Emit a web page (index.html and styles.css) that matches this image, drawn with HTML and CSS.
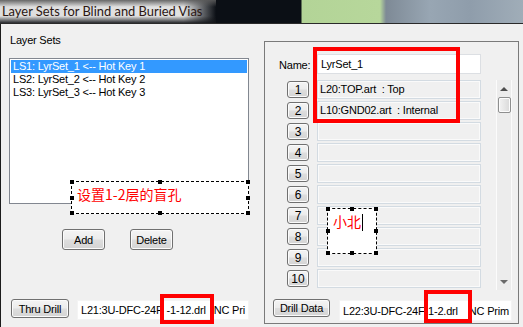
FILE: index.html
```html
<!DOCTYPE html>
<html>
<head>
<meta charset="utf-8">
<link rel="stylesheet" href="styles.css">
</head>
<body>
<div class="titlebar"><span class="title">Layer Sets for Blind and Buried Vias</span></div>
<div class="dialog">
  <div class="left">
    <div class="label">Layer Sets</div>
    <div class="listbox">
      <div class="item sel">LS1: LyrSet_1 &lt;-- Hot Key 1</div>
      <div class="item">LS2: LyrSet_2 &lt;-- Hot Key 2</div>
      <div class="item">LS3: LyrSet_3 &lt;-- Hot Key 3</div>
    </div>
    <div class="btnrow">
      <div class="btn btn-std">Add</div>
      <div class="btn btn-std">Delete</div>
    </div>
    <div class="bottomrow">
      <div class="btn btn-thru">Thru Drill</div>
      <div class="drillfield drillfield-left"><span>L21:3U-DFC-24F</span><span class="gap-a">-1-12.drl</span><span class="gap-b">NC Pri</span></div>
    </div>
  </div>

  <div class="group">
    <div class="namerow">
      <span class="namelabel">Name:</span>
      <div class="input">LyrSet_1</div>
    </div>
    <div class="layerarea">
      <div class="rows">
        <div class="row"><div class="btn num">1</div><div class="lfield">L20:TOP.art&nbsp; : Top</div></div>
        <div class="row"><div class="btn num">2</div><div class="lfield">L10:GND02.art&nbsp; : Internal</div></div>
        <div class="row"><div class="btn num">3</div><div class="lfield"></div></div>
        <div class="row"><div class="btn num">4</div><div class="lfield"></div></div>
        <div class="row"><div class="btn num">5</div><div class="lfield"></div></div>
        <div class="row"><div class="btn num">6</div><div class="lfield"></div></div>
        <div class="row"><div class="btn num">7</div><div class="lfield"></div></div>
        <div class="row"><div class="btn num">8</div><div class="lfield"></div></div>
        <div class="row"><div class="btn num">9</div><div class="lfield"></div></div>
        <div class="row"><div class="btn num">10</div><div class="lfield"></div></div>
      </div>
      <div class="scroll">
        <div class="arrowbox"><span class="tri-up"></span></div>
        <div class="thumb"></div>
        <div class="spacer"></div>
        <div class="arrowbox"><span class="tri-down"></span></div>
      </div>
    </div>
    <div class="bottomrow2">
      <div class="btn btn-drill">Drill Data</div>
      <div class="drillfield drillfield-right"><span>L22:3U-DFC-24F-1-2.drl</span><span class="gap-c">NC Prim</span></div>
    </div>
    <div class="redbox redbox-name"></div>
    <div class="redbox redbox-right"></div>
  </div>

  <div class="redbox redbox-left"></div>

  <div class="note note-a">设置1-2层的盲孔
    <span class="h h1"></span><span class="h h2"></span><span class="h h3"></span>
    <span class="h h4"></span><span class="h h5"></span>
    <span class="h h6"></span><span class="h h7"></span><span class="h h8"></span>
  </div>
  <div class="note note-b">小北<span class="caret"></span>
    <span class="h h1"></span><span class="h h2"></span><span class="h h3"></span>
    <span class="h h4"></span><span class="h h5"></span>
    <span class="h h6"></span><span class="h h7"></span><span class="h h8"></span>
  </div>
</div>
</body>
</html>
```

FILE: styles.css
```css
* { box-sizing: border-box; margin: 0; padding: 0; }

body {
  width: 523px;
  height: 327px;
  overflow: hidden;
  background: #f0f0f0;
  font-family: "Liberation Sans", Arial, sans-serif;
  font-size: 11px;
  letter-spacing: -0.2px;
  color: #000;
}

.titlebar {
  height: 24px;
  border-bottom: 1px solid #2a2a2a;
  display: flex;
  background: linear-gradient(to right, #0b0f15 0, #0b0f15 301px, #b3d497 302px, #b7d79b 380px, #7e8a96 386px, #98a6b3 430px, #8f9dab 470px, #a0adb8 523px);
}

.title {
  width: 216px;
  height: 23px;
  line-height: 23px;
  padding: 0 0 0 2px;
  font-family: Lato, "Noto Sans", sans-serif;
  font-size: 12.9px;
  letter-spacing: 0;
  white-space: nowrap;
  color: #2a1612;
  background:
    linear-gradient(to bottom, rgba(90, 90, 90, 0.9) 0, rgba(200, 200, 200, 0) 30%, rgba(200, 200, 200, 0) 70%, rgba(20, 22, 26, 0.9) 100%),
    linear-gradient(to right, #dedede 0, #e2e2e2 85%, #0b0f15 100%);
}

.dialog {
  position: relative;
  display: flex;
  height: 303px;
  border-left: 1px solid #1c1c1c;
}

/* left pane */
.left {
  width: 263px;
  padding: 10px 0 0 8px;
}

.label {
  height: 13px;
  line-height: 13px;
  padding-left: 1px;
}

.listbox {
  margin-top: 11px;
  width: 240px;
  height: 146px;
  border: 1px solid #828790;
  background: #fff;
  padding: 1px;
}

.item {
  height: 13px;
  line-height: 13px;
  padding-left: 2px;
  white-space: nowrap;
}

.item.sel {
  background: #3399ff;
  color: #fff;
}

.btn {
  display: flex;
  align-items: center;
  justify-content: center;
  border: 1px solid #707070;
  border-radius: 3px;
  background: linear-gradient(to bottom, #f4f4f4 0, #ececec 48%, #dedede 52%, #d4d4d4 100%);
  box-shadow: inset 0 0 0 1px #fbfbfb;
  white-space: nowrap;
}

.btnrow {
  display: flex;
  gap: 25px;
  margin: 25px 0 0 53px;
}

.btn-std {
  width: 43px;
  height: 21px;
}

.bottomrow {
  display: flex;
  align-items: flex-start;
  margin: 49px 0 0 2px;
  gap: 8px;
}

.btn-thru {
  width: 58px;
  height: 19px;
}

.drillfield {
  background: #fff;
  overflow: hidden;
  white-space: nowrap;
  display: flex;
  align-items: center;
  padding-left: 3px;
  border: 1px solid #f4f4f4;
}

.drillfield-left {
  width: 172px;
  height: 20px;
  margin-top: 1px;
}

.gap-a { margin-left: 4px; }
.gap-b { margin-left: 8px; }
.gap-c { margin-left: 11px; }

/* right group */
.group {
  position: relative;
  margin-top: 17px;
  width: 255px;
  height: 283px;
  border: 1px solid #7a7a7a;
}

.namerow {
  display: flex;
  align-items: center;
  margin: 12px 0 0 14px;
}

.namelabel {
  width: 38px;
  padding-top: 2px;
}

.input {
  width: 164px;
  height: 20px;
  line-height: 18px;
  padding-left: 3px;
  background: #fff;
  border: 1px solid #dcdfe3;
}

.layerarea {
  display: flex;
  margin-top: 6px;
}

.rows {
  display: flex;
  flex-direction: column;
  gap: 2px;
  padding-left: 22px;
}

.row {
  display: flex;
  align-items: center;
  gap: 8px;
}

.num {
  width: 22px;
  height: 17px;
  font-size: 12px;
  letter-spacing: 0;
}

.lfield {
  width: 164px;
  height: 19px;
  line-height: 17px;
  padding-left: 2px;
  background: #f0f0f0;
  border: 1px solid #d3dbe2;
  box-shadow: inset 0 0 0 1px #fafafa;
  white-space: nowrap;
}

.scroll {
  margin-left: 15px;
  width: 16px;
  height: 210px;
  display: flex;
  flex-direction: column;
  align-items: center;
  background: #ececec;
  border-left: 1px solid #fbfbfb;
  border-right: 1px solid #fbfbfb;
}

.arrowbox {
  width: 100%;
  height: 17px;
  display: flex;
  align-items: center;
  justify-content: center;
}

.tri-up {
  width: 0;
  height: 0;
  border-left: 4px solid transparent;
  border-right: 4px solid transparent;
  border-bottom: 4px solid #4e4e4e;
}

.tri-down {
  width: 0;
  height: 0;
  border-left: 4px solid transparent;
  border-right: 4px solid transparent;
  border-top: 4px solid #6a6a6a;
}

.thumb {
  width: 13px;
  height: 16px;
  border: 1px solid #8e8f8f;
  border-radius: 2px;
  background: linear-gradient(to right, #f3f3f3, #e6e6e6 50%, #d9d9d9);
  box-shadow: inset 0 0 0 1px #fcfcfc;
}

.spacer { flex: 1; }

.bottomrow2 {
  display: flex;
  align-items: flex-start;
  gap: 9px;
  margin: 9px 0 0 8px;
}

.btn-drill {
  width: 57px;
  height: 18px;
}

.drillfield-right {
  width: 173px;
  height: 21px;
  margin-top: 1px;
}

/* overlays */
.redbox {
  position: absolute;
  border: 4px solid #ff0000;
}

.redbox-name { left: 48px; top: 5px; width: 147px; height: 76px; }
.redbox-right { left: 159px; top: 248px; width: 48px; height: 33px; }
.redbox-left { left: 159px; top: 270px; width: 54px; height: 30px; }

.note {
  position: absolute;
  background: #fff;
  border: 1px dashed #000;
  color: #ff0000;
  font-family: "Noto Sans CJK SC", "Noto Sans", sans-serif;
  font-size: 14px;
  letter-spacing: 0;
  white-space: nowrap;
}

.note-a {
  left: 70px;
  top: 157px;
  width: 178px;
  height: 33px;
  line-height: 18px;
  padding: 3px 0 0 5px;
}

.note-b {
  left: 326px;
  top: 184px;
  width: 50px;
  height: 46px;
  line-height: 16px;
  padding: 4px 0 0 5px;
}

.caret {
  display: inline-block;
  width: 1px;
  height: 17px;
  background: #000;
  vertical-align: -4px;
  margin-left: 1px;
}

.h {
  position: absolute;
  width: 4px;
  height: 4px;
  background: #000;
  transform: translate(-50%, -50%);
}

.h1 { left: 0; top: 0; }
.h2 { left: 50%; top: 0; }
.h3 { left: 100%; top: 0; }
.h4 { left: 0; top: 50%; }
.h5 { left: 100%; top: 50%; }
.h6 { left: 0; top: 100%; }
.h7 { left: 50%; top: 100%; }
.h8 { left: 100%; top: 100%; }
```
